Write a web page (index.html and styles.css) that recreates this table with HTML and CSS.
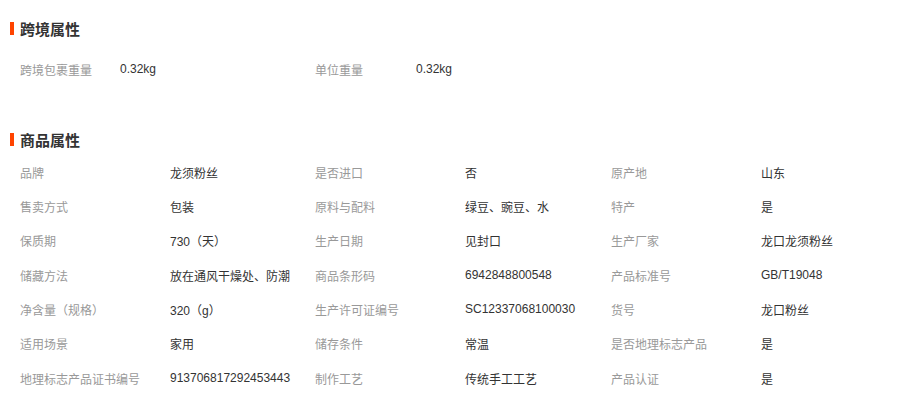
FILE: index.html
```html
<!DOCTYPE html>
<html lang="zh-CN">

<head>
    <meta charset="UTF-8">
    <meta name="viewport" content="width=device-width, initial-scale=1.0">
    <title>商品属性</title>
    <link rel="stylesheet" href="styles.css">
</head>

<body>
    <div class="attr-box">
        <h3 class="attr-title">跨境属性</h3>
        <div class="attr-grid grid-cross">
            <span class="attr-label">跨境包裹重量</span>
            <span class="attr-value">0.32kg</span>
            <span class="attr-label">单位重量</span>
            <span class="attr-value">0.32kg</span>
        </div>
    </div>

    <div class="attr-box attr-box-goods">
        <h3 class="attr-title">商品属性</h3>
        <div class="attr-grid grid-goods">
            <span class="attr-label">品牌</span>
            <span class="attr-value">龙须粉丝</span>
            <span class="attr-label">是否进口</span>
            <span class="attr-value">否</span>
            <span class="attr-label">原产地</span>
            <span class="attr-value">山东</span>

            <span class="attr-label">售卖方式</span>
            <span class="attr-value">包装</span>
            <span class="attr-label">原料与配料</span>
            <span class="attr-value">绿豆、豌豆、水</span>
            <span class="attr-label">特产</span>
            <span class="attr-value">是</span>

            <span class="attr-label">保质期</span>
            <span class="attr-value">730（天）</span>
            <span class="attr-label">生产日期</span>
            <span class="attr-value">见封口</span>
            <span class="attr-label">生产厂家</span>
            <span class="attr-value">龙口龙须粉丝</span>

            <span class="attr-label">储藏方法</span>
            <span class="attr-value">放在通风干燥处、防潮</span>
            <span class="attr-label">商品条形码</span>
            <span class="attr-value">6942848800548</span>
            <span class="attr-label">产品标准号</span>
            <span class="attr-value">GB/T19048</span>

            <span class="attr-label">净含量（规格）</span>
            <span class="attr-value">320（g）</span>
            <span class="attr-label">生产许可证编号</span>
            <span class="attr-value">SC12337068100030</span>
            <span class="attr-label">货号</span>
            <span class="attr-value">龙口粉丝</span>

            <span class="attr-label">适用场景</span>
            <span class="attr-value">家用</span>
            <span class="attr-label">储存条件</span>
            <span class="attr-value">常温</span>
            <span class="attr-label">是否地理标志产品</span>
            <span class="attr-value">是</span>

            <span class="attr-label">地理标志产品证书编号</span>
            <span class="attr-value">913706817292453443</span>
            <span class="attr-label">制作工艺</span>
            <span class="attr-value">传统手工工艺</span>
            <span class="attr-label">产品认证</span>
            <span class="attr-value">是</span>
        </div>
    </div>
</body>

</html>
```

FILE: styles.css
```css
body {
    font-family: 'Liberation Sans', 'Noto Sans CJK SC', sans-serif;
    font-size: 12px;
    color: #333;
    background-color: #fff;
    margin: 0;
    padding: 18px 0 0 10px;
}

.attr-title {
    display: flex;
    align-items: center;
    height: 20px;
    margin: 0;
    font-size: 15px;
    font-weight: bold;
    color: #333;
}

.attr-title::before {
    content: '';
    width: 4px;
    height: 13px;
    margin-right: 6px;
    background-color: #ff4400;
}

.attr-box-goods {
    margin-top: 43px;
}

.attr-grid {
    display: grid;
    padding-left: 10px;
}

.grid-cross {
    grid-template-columns: 100px 195px 101px auto;
    grid-auto-rows: 34px;
    margin-top: 14px;
}

.grid-goods {
    grid-template-columns: 150px 145px 150px 146px 150px auto;
    grid-auto-rows: 34.33px;
    margin-top: 6px;
}

.attr-label,
.attr-value {
    display: flex;
    align-items: center;
    white-space: nowrap;
}

.attr-label {
    color: #999;
}

.attr-value {
    color: #333;
}
```
